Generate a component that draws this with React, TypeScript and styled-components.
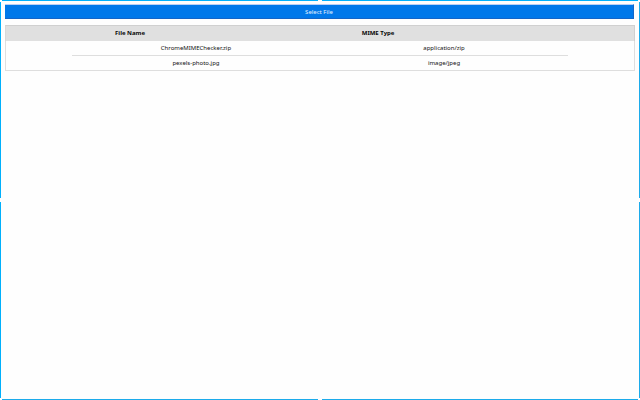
import React from "react";
import styled, { createGlobalStyle } from "styled-components";

const GlobalStyle = createGlobalStyle`
  *, *::before, *::after { box-sizing: border-box; }
  body {
    margin: 0;
    background: #fefefe;
    color: #101010;
    font-family: "Noto Sans", "Open Sans", sans-serif;
    font-size: 6px;
    line-height: 8px;
  }
`;

const Frame = styled.main`
  position: relative;
  display: flex;
  flex-direction: column;
  gap: 6px;
  min-height: 100vh;
  padding: 3px 4px;
  border: 1px solid #00b0fc;
  border-right-color: #1cabeb;
  border-bottom-color: #1cabeb;
`;

const HandleLayer = styled.div`
  position: absolute;
  inset: -1px;
  overflow: hidden;
  pointer-events: none;
`;

const Handle = styled.span<{ $x: string; $y: string }>`
  position: absolute;
  left: ${(p) => p.$x};
  top: ${(p) => p.$y};
  width: 4px;
  height: 4px;
  margin: -2px;
  background: #fefefe;
`;

const SelectButton = styled.button`
  height: 15px;
  margin-right: 1px;
  padding: 0;
  border: 0 solid #1465c8;
  border-top: 1px solid #b9cff5;
  border-right-width: 1px;
  border-bottom-width: 1px;
  background: #0078ea;
  color: #e2f0ff;
  font: inherit;
  cursor: pointer;
`;

const FileTable = styled.table`
  display: block;
  border: 1px solid #dedede;
  text-align: center;
`;

const Head = styled.thead`
  display: block;
  margin: -1px -1px 0;
  border: 1px solid #d0d0d0;
  border-left-color: #d8d8d8;
  border-bottom: 0;
  background: #e0e0e0;
`;

const Body = styled.tbody`
  display: block;
  width: 79%;
  margin: 0 auto;
`;

const HeadRow = styled.tr`
  display: grid;
  grid-template-columns: 1fr 1fr;
  width: 79%;
`;

const Row = styled.tr`
  display: grid;
  grid-template-columns: 1fr 1fr;

  & + & { border-top: 1px solid #dedede; }
`;

const HeadCell = styled.th`
  padding: 3px 0 4px;
  color: #080808;
  font-weight: 700;
`;

const Cell = styled.td`
  padding: 3px 0;
`;

const files = [
  { name: "ChromeMIMEChecker.zip", type: "application/zip" },
  { name: "pexels-photo.jpg", type: "image/jpeg" },
];

const handles = [
  ["0%", "0%"], ["50%", "0%"], ["100%", "0%"],
  ["0%", "50%"], ["100%", "50%"],
  ["0%", "100%"], ["50%", "100%"], ["100%", "100%"],
];

export default function App() {
  return (
    <>
      <GlobalStyle />
      <Frame>
        <SelectButton type="button">Select File</SelectButton>
        <FileTable>
          <Head>
            <HeadRow>
              <HeadCell scope="col">File Name</HeadCell>
              <HeadCell scope="col">MIME Type</HeadCell>
            </HeadRow>
          </Head>
          <Body>
            {files.map((file) => (
              <Row key={file.name}>
                <Cell>{file.name}</Cell>
                <Cell>{file.type}</Cell>
              </Row>
            ))}
          </Body>
        </FileTable>
        <HandleLayer aria-hidden="true">
          {handles.map(([x, y]) => (
            <Handle key={x + y} $x={x} $y={y} />
          ))}
        </HandleLayer>
      </Frame>
    </>
  );
}
